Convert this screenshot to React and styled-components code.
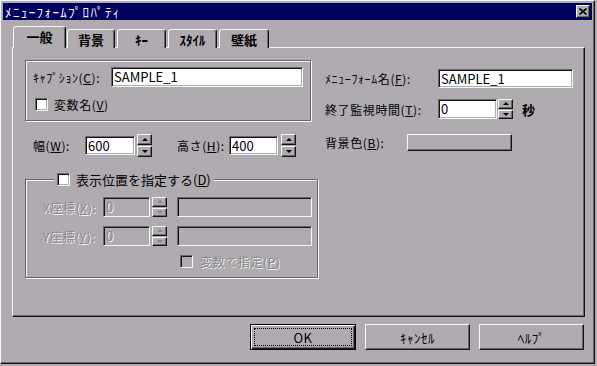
import React from 'react';
import styled, { createGlobalStyle, css } from 'styled-components';

const C = {
  face: '#b0abb0',
  light: '#f2faf2',
  shadow: '#6c666c',
  dark: '#141414',
  navy: '#00005e',
  disabled: '#8a848a',
};

const Global = createGlobalStyle`
  html, body { margin: 0; padding: 0; background: ${C.face}; }
  body {
    font-family: "Noto Sans CJK JP", "Noto Sans", sans-serif;
    font-size: 12px;
    color: #000;
  }
`;

const raised = css`
  border: 1px solid;
  border-color: ${C.light} ${C.dark} ${C.dark} ${C.light};
  box-shadow: inset -1px -1px 0 ${C.shadow};
`;

const sunken = css`
  border: 1px solid;
  border-color: ${C.shadow} ${C.light} ${C.light} ${C.shadow};
  box-shadow: inset 1px 1px 0 ${C.dark}, inset -1px -1px 0 ${C.face};
`;

const Dialog = styled.div`
  width: 595px;
  height: 364px;
  box-sizing: border-box;
  padding: 2px;
  display: flex;
  flex-direction: column;
  ${raised};
`;

const TitleBar = styled.div`
  height: 17px;
  background: ${C.navy};
  color: #fff;
  display: flex;
  align-items: center;
  justify-content: space-between;
  padding: 0 2px 0 2px;
  font-size: 13px;
  letter-spacing: 1.4px;
`;

const CloseBox = styled.div`
  width: 14px;
  height: 13px;
  box-sizing: border-box;
  background: ${C.face};
  display: flex;
  align-items: center;
  justify-content: center;
  ${raised};
`;

const TabRow = styled.div`
  display: flex;
  align-items: flex-end;
  height: 22px;
  margin: 6px 0 -1px 10px;
  position: relative;
  z-index: 1;
`;

const Tab = styled.div`
  box-sizing: border-box;
  width: ${p => p.$w}px;
  height: ${p => (p.$active ? 22 : 19)}px;
  margin-right: ${p => (p.$active ? 1 : 2)}px;
  background: ${C.face};
  border: 1px solid;
  border-bottom: none;
  border-color: ${C.light} ${C.dark} transparent ${C.light};
  border-radius: 3px 3px 0 0;
  box-shadow: inset -1px 0 0 ${C.shadow};
  display: flex;
  align-items: center;
  justify-content: center;
  font-size: 13px;
  font-weight: bold;
  padding-bottom: ${p => (p.$active ? 2 : 0)}px;
`;

const Panel = styled.div`
  width: 573px;
  height: 270px;
  box-sizing: border-box;
  margin-left: 9px;
  padding: 12px 0 0 12px;
  display: flex;
  gap: 6px;
  ${raised};
`;

const LeftCol = styled.div`
  width: 294px;
  display: flex;
  flex-direction: column;
`;

const RightCol = styled.div`
  display: flex;
  flex-direction: column;
  padding-top: 8px;
`;

const GroupBox = styled.div`
  width: 286px;
  height: 61px;
  box-sizing: border-box;
  padding: 6px 0 0 7px;
  border: 1px solid ${C.shadow};
  box-shadow: inset 1px 1px 0 ${C.light}, 1px 1px 0 ${C.light};
  display: flex;
  flex-direction: column;
  gap: 11px;
`;

const Fieldset = styled.fieldset`
  width: 293px;
  box-sizing: border-box;
  margin: 13px 0 0 0;
  padding: 8px 0 9px 17px;
  border: 1px solid ${C.shadow};
  box-shadow: inset 1px 1px 0 ${C.light}, 1px 1px 0 ${C.light};
  display: flex;
  flex-direction: column;
  gap: 9px;
`;

const Legend = styled.legend`
  margin-left: 11px;
  padding: 0 3px;
  background: ${C.face};
  display: flex;
  align-items: center;
  gap: 6px;
  font-size: 13px;
`;

const Row = styled.div`
  display: flex;
  align-items: center;
  height: ${p => p.$h || 20}px;
  margin-top: ${p => p.$mt || 0}px;
  padding-left: ${p => p.$pl || 0}px;
`;

const Label = styled.span`
  width: ${p => p.$w}px;
  flex: none;
  white-space: nowrap;
  letter-spacing: 0.6px;
  color: ${p => (p.$disabled ? C.disabled : '#000')};
  text-shadow: ${p => (p.$disabled ? `1px 1px 0 ${C.light}` : 'none')};
  margin-left: ${p => p.$ml || 0}px;
`;

const Field = styled.div`
  width: ${p => p.$w}px;
  height: ${p => p.$h || 20}px;
  box-sizing: border-box;
  flex: none;
  background: ${p => (p.$disabled ? C.face : '#fff')};
  color: ${p => (p.$disabled ? C.disabled : '#000')};
  text-shadow: ${p => (p.$disabled ? `1px 1px 0 ${C.light}` : 'none')};
  font-size: 13px;
  line-height: 16px;
  padding: 1px 0 0 2px;
  margin-left: ${p => p.$ml || 0}px;
  white-space: nowrap;
  overflow: hidden;
  ${sunken};
`;

const Spinner = styled.div`
  width: 15px;
  height: ${p => p.$h}px;
  margin-left: ${p => p.$ml || 0}px;
  flex: none;
  display: flex;
  flex-direction: column;
  gap: 1px;
`;

const SpinBtn = styled.div`
  flex: 1;
  box-sizing: border-box;
  background: ${C.face};
  display: flex;
  align-items: center;
  justify-content: center;
  ${raised};

  &::after {
    content: '';
    width: 0;
    height: 0;
    border-left: 3px solid transparent;
    border-right: 3px solid transparent;
    ${p =>
      p.$down
        ? css`border-top: 3px solid ${p.$disabled ? C.disabled : '#000'};`
        : css`border-bottom: 3px solid ${p.$disabled ? C.disabled : '#000'};`}
  }
`;

const Check = styled.span`
  width: 13px;
  height: 13px;
  box-sizing: border-box;
  flex: none;
  background: ${p => (p.$disabled ? C.face : '#fff')};
  margin-left: ${p => p.$ml || 0}px;
  ${sunken};
`;

const ColorButton = styled.div`
  width: 105px;
  height: 17px;
  box-sizing: border-box;
  background: ${C.face};
  ${raised};
`;

const Unit = styled.span`
  margin-left: 9px;
  font-size: 13px;
  font-weight: bold;
`;

const ButtonRow = styled.div`
  display: flex;
  justify-content: flex-end;
  gap: 9px;
  margin-top: 7px;
  padding-right: 8px;
`;

const Button = styled.div`
  width: 105px;
  height: 26px;
  box-sizing: border-box;
  background: ${C.face};
  display: flex;
  align-items: center;
  justify-content: center;
  font-size: 13px;
  letter-spacing: 0.5px;
  ${raised};
  ${p =>
    p.$default &&
    css`
      width: 106px;
      border-color: #000;
      box-shadow: inset 1px 1px 0 ${C.light}, inset -1px -1px 0 ${C.dark},
        inset -2px -2px 0 ${C.shadow};
      padding: 3px;
    `}
`;

const Focus = styled.span`
  flex: 1;
  align-self: stretch;
  border: 1px dotted #000;
  display: flex;
  align-items: center;
  justify-content: center;
`;

const Spin = ({ h, ml, disabled }) => (
  <Spinner $h={h} $ml={ml}>
    <SpinBtn $disabled={disabled} />
    <SpinBtn $down $disabled={disabled} />
  </Spinner>
);

export default function App() {
  return (
    <>
      <Global />
      <Dialog>
        <TitleBar>
          <span>ﾒﾆｭｰﾌｫｰﾑﾌﾟﾛﾊﾟﾃｨ</span>
          <CloseBox>
            <svg width="8" height="7" viewBox="0 0 8 7">
              <path d="M0.5 0.5 L7.5 6.5 M7.5 0.5 L0.5 6.5" stroke="#000" strokeWidth="1.6" />
            </svg>
          </CloseBox>
        </TitleBar>

        <TabRow>
          <Tab $w={53} $active>一般</Tab>
          <Tab $w={48}>背景</Tab>
          <Tab $w={49}>ｷｰ</Tab>
          <Tab $w={49}>ｽﾀｲﾙ</Tab>
          <Tab $w={50}>壁紙</Tab>
        </TabRow>

        <Panel>
          <LeftCol>
            <GroupBox>
              <Row>
                <Label $w={78}>ｷｬﾌﾟｼｮﾝ(<u>C</u>):</Label>
                <Field $w={192}>SAMPLE_1</Field>
              </Row>
              <Row $h={13} $pl={2}>
                <Check />
                <Label $w={80} $ml={6}>変数名(<u>V</u>)</Label>
              </Row>
            </GroupBox>

            <Row $h={24} $mt={12} $pl={8}>
              <Label $w={52}>幅(<u>W</u>):</Label>
              <Field $w={50} $h={19}>600</Field>
              <Spin h={23} ml={2} />
              <Label $w={52} $ml={25}>高さ(<u>H</u>):</Label>
              <Field $w={49} $h={19}>400</Field>
              <Spin h={23} ml={3} />
            </Row>

            <Fieldset>
              <Legend>
                <Check />
                <span>表示位置を指定する(<u>D</u>)</span>
              </Legend>
              <Row>
                <Label $w={60} $disabled>X座標(<u>X</u>):</Label>
                <Field $w={47} $disabled>0</Field>
                <Spin h={20} ml={2} disabled />
                <Field $w={135} $ml={10} $disabled />
              </Row>
              <Row>
                <Label $w={60} $disabled>Y座標(<u>Y</u>):</Label>
                <Field $w={47} $disabled>0</Field>
                <Spin h={20} ml={2} disabled />
                <Field $w={135} $ml={10} $disabled />
              </Row>
              <Row $h={13}>
                <Check $ml={137} $disabled />
                <Label $w={100} $ml={7} $disabled>変数で指定(<u>P</u>)</Label>
              </Row>
            </Fieldset>
          </LeftCol>

          <RightCol>
            <Row>
              <Label $w={113}>ﾒﾆｭｰﾌｫｰﾑ名(<u>F</u>):</Label>
              <Field $w={135} $h={19}>SAMPLE_1</Field>
            </Row>
            <Row $mt={11}>
              <Label $w={113}>終了監視時間(<u>T</u>):</Label>
              <Field $w={59}>0</Field>
              <Spin h={20} ml={1} />
              <Unit>秒</Unit>
            </Row>
            <Row $h={17} $mt={15}>
              <Label $w={82}>背景色(<u>B</u>):</Label>
              <ColorButton />
            </Row>
          </RightCol>
        </Panel>

        <ButtonRow>
          <Button $default>
            <Focus>OK</Focus>
          </Button>
          <Button>ｷｬﾝｾﾙ</Button>
          <Button>ﾍﾙﾌﾟ</Button>
        </ButtonRow>
      </Dialog>
    </>
  );
}
